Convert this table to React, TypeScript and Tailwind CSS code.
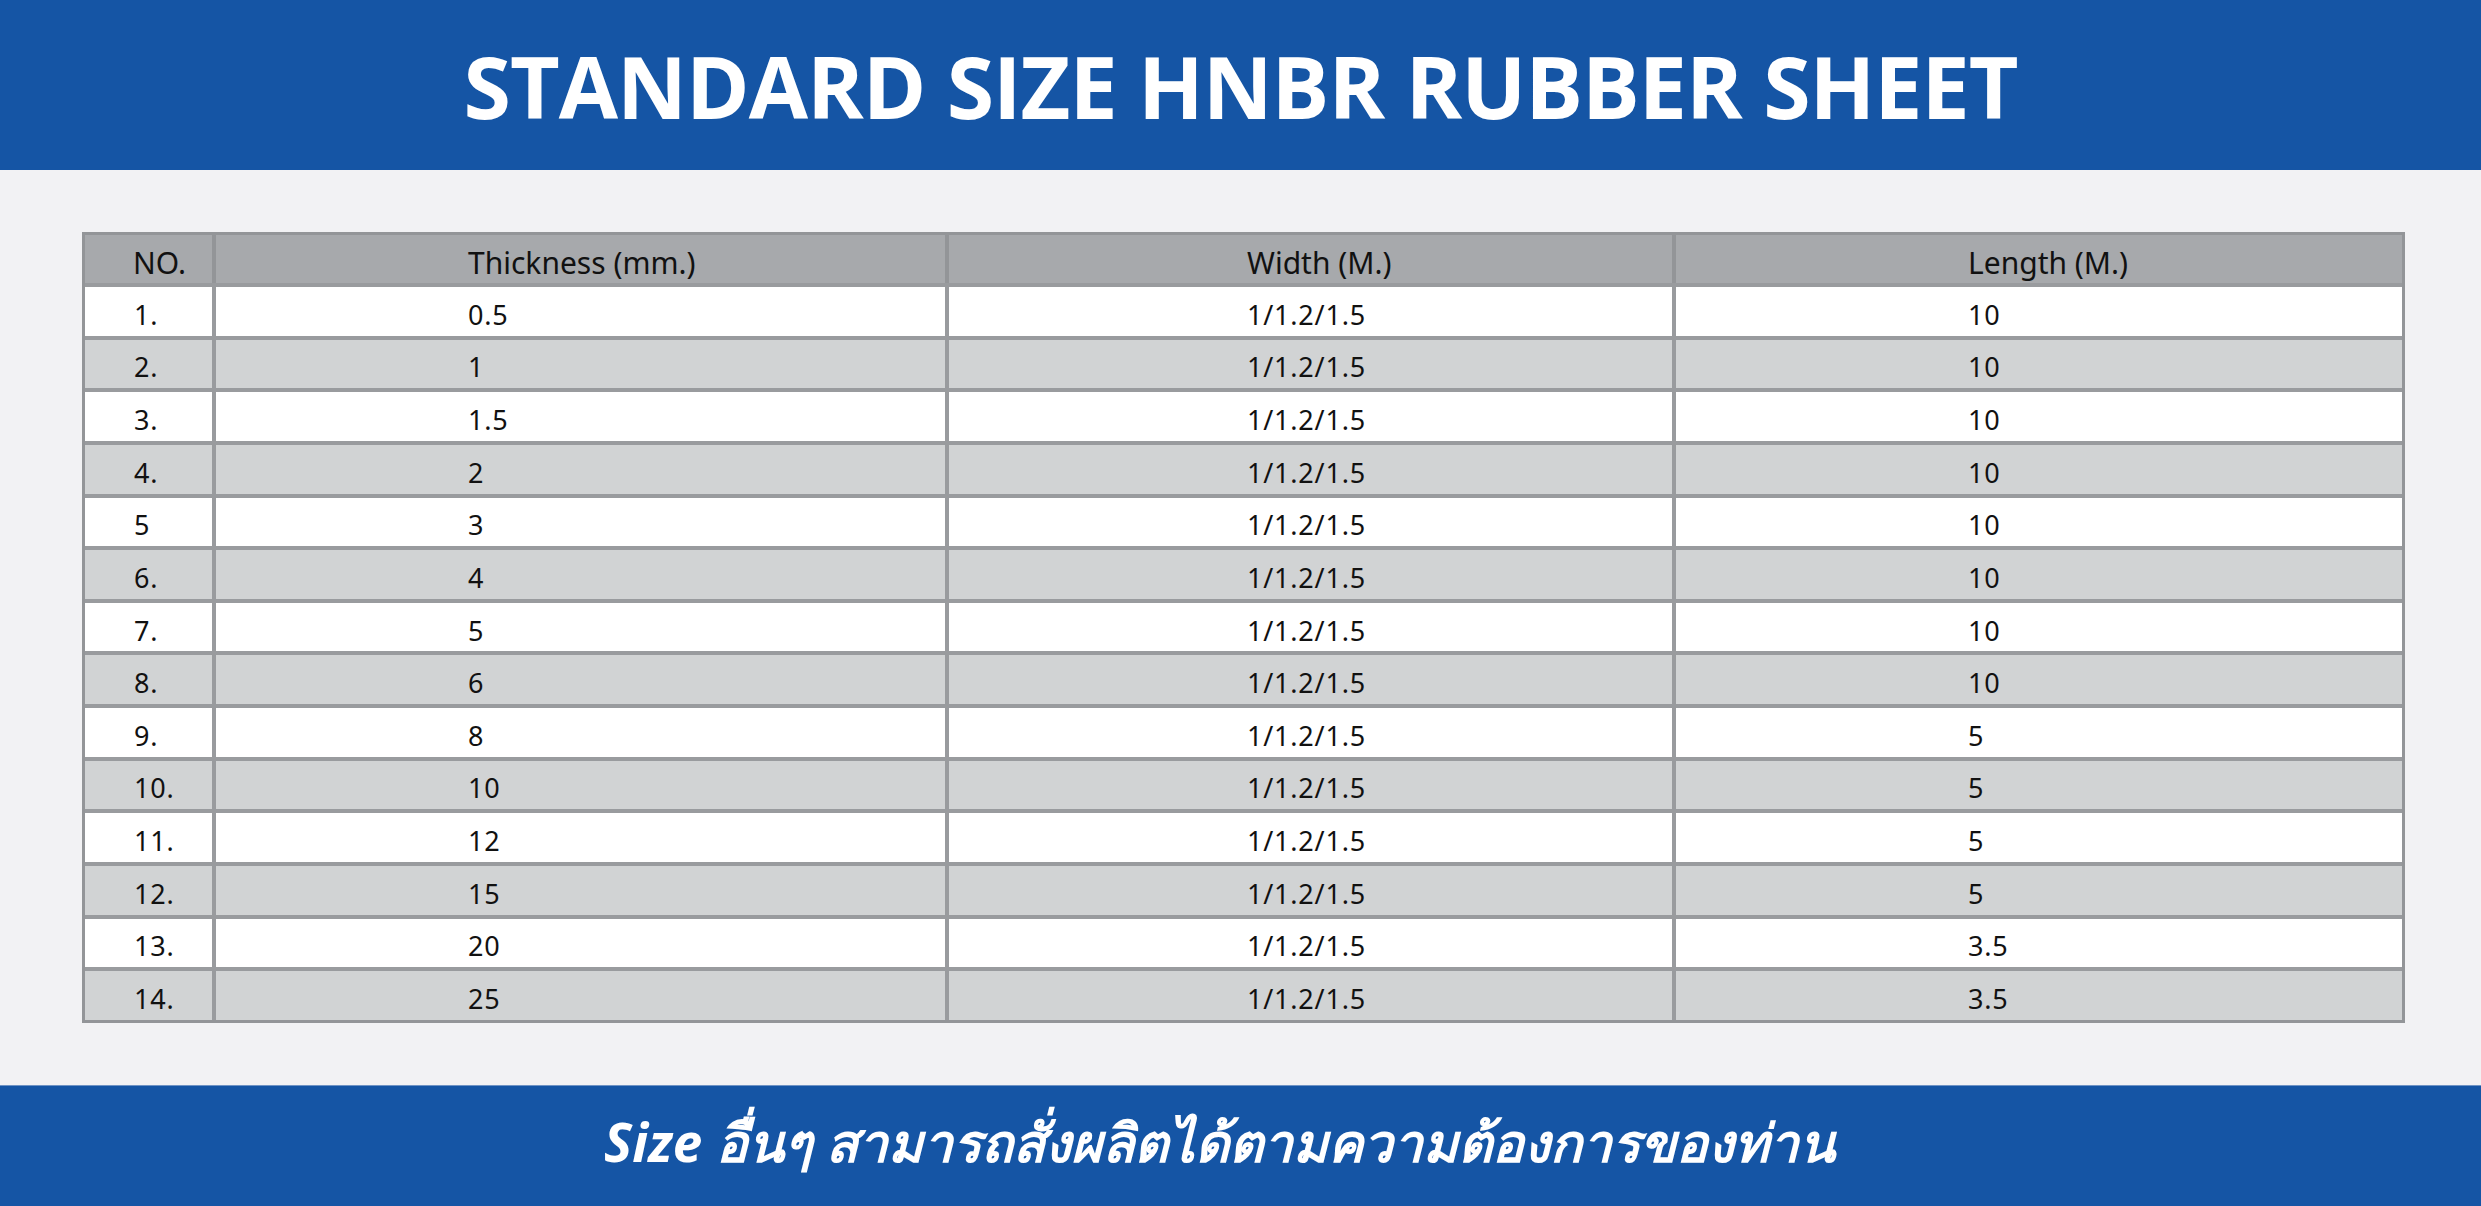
import React from "react";

const rows: [string, string, string, string][] = [
  ["1.", "0.5", "1/1.2/1.5", "10"],
  ["2.", "1", "1/1.2/1.5", "10"],
  ["3.", "1.5", "1/1.2/1.5", "10"],
  ["4.", "2", "1/1.2/1.5", "10"],
  ["5", "3", "1/1.2/1.5", "10"],
  ["6.", "4", "1/1.2/1.5", "10"],
  ["7.", "5", "1/1.2/1.5", "10"],
  ["8.", "6", "1/1.2/1.5", "10"],
  ["9.", "8", "1/1.2/1.5", "5"],
  ["10.", "10", "1/1.2/1.5", "5"],
  ["11.", "12", "1/1.2/1.5", "5"],
  ["12.", "15", "1/1.2/1.5", "5"],
  ["13.", "20", "1/1.2/1.5", "3.5"],
  ["14.", "25", "1/1.2/1.5", "3.5"],
];

const font = { fontFamily: '"Noto Sans", "Open Sans", sans-serif' };

export default function App() {
  return (
    <div className="w-[2481px] h-[1206px] flex flex-col bg-[#f2f2f4] overflow-hidden" style={font}>
      <header className="h-[170px] shrink-0 bg-[#1555a5] flex items-center justify-center">
        <h1 className="text-white font-bold text-[86px] leading-none tracking-[-1px] pt-[2px]" style={{ fontFamily: '"Open Sans", "Noto Sans", sans-serif' }}>
          STANDARD SIZE HNBR RUBBER SHEET
        </h1>
      </header>

      <main className="h-[915px] shrink-0 pt-[62px] pl-[82px]">
        <div className="w-[2323px] border-[3px] border-[#939598] text-[#111]">
          <div className="grid grid-cols-[127px_733px_727px_730px] h-[48px] bg-[#a7a9ac] text-[30px] leading-none">
            <div className="flex items-center pl-[48px] pt-[7px]">NO.</div>
            <div className="flex items-center pl-[252px] pt-[7px] border-l-4 border-[#939598]">Thickness (mm.)</div>
            <div className="flex items-center pl-[298px] pt-[7px] border-l-4 border-[#939598]">Width (M.)</div>
            <div className="flex items-center pl-[292px] pt-[7px] border-l-4 border-[#939598]">Length (M.)</div>
          </div>
          {rows.map((r, i) => (
            <div
              key={i}
              className={`grid grid-cols-[127px_733px_727px_730px] h-[52.64px] border-t-4 border-[#999b9e] text-[27px] tracking-[0.8px] leading-none ${
                i % 2 === 0 ? "bg-white" : "bg-[#d1d3d4]"
              }`}
            >
              <div className="flex items-center pl-[49px] pt-[6px]">{r[0]}</div>
              <div className="flex items-center pl-[252px] pt-[6px] border-l-4 border-[#999b9e]">{r[1]}</div>
              <div className="flex items-center pl-[298px] pt-[6px] border-l-4 border-[#999b9e]">{r[2]}</div>
              <div className="flex items-center pl-[292px] pt-[6px] border-l-4 border-[#999b9e]">{r[3]}</div>
            </div>
          ))}
        </div>
      </main>

      <footer className="flex-1 bg-[#1555a5] border-t border-[#6f93c4] flex items-center justify-center">
        <p className="text-white font-bold italic text-[53px] leading-none pb-[10px] pr-[42px]">
          Size อื่นๆ สามารถสั่งผลิตได้ตามความต้องการของท่าน
        </p>
      </footer>
    </div>
  );
}
